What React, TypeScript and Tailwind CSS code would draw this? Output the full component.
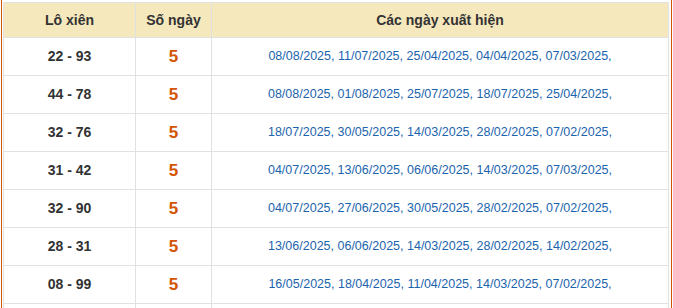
const rows: [string, string][] = [
  ['22 - 93', '08/08/2025, 11/07/2025, 25/04/2025, 04/04/2025, 07/03/2025,'],
  ['44 - 78', '08/08/2025, 01/08/2025, 25/07/2025, 18/07/2025, 25/04/2025,'],
  ['32 - 76', '18/07/2025, 30/05/2025, 14/03/2025, 28/02/2025, 07/02/2025,'],
  ['31 - 42', '04/07/2025, 13/06/2025, 06/06/2025, 14/03/2025, 07/03/2025,'],
  ['32 - 90', '04/07/2025, 27/06/2025, 30/05/2025, 28/02/2025, 07/02/2025,'],
  ['28 - 31', '13/06/2025, 06/06/2025, 14/03/2025, 28/02/2025, 14/02/2025,'],
  ['08 - 99', '16/05/2025, 18/04/2025, 11/04/2025, 14/03/2025, 07/02/2025,'],
]

export default function App() {
  return (
    <div className="w-[673px] h-[308px] overflow-hidden bg-white pl-[1px] font-['Liberation_Sans',Arial,sans-serif]">
      <div className="w-[671px] h-[320px] border-x-[1.5px] border-[#d35400] pl-[1px] pr-[0.5px] pt-[2px]">
        <table className="w-[666px] border-collapse table-fixed">
          <colgroup>
            <col className="w-[132px]" />
            <col className="w-[76px]" />
            <col />
          </colgroup>
          <thead>
            <tr className="h-[35px] bg-[#f6e8bd] text-[14px] font-bold text-[#333]">
              <th className="border border-[#e1e1e1]">Lô xiên</th>
              <th className="border border-[#e1e1e1]">Số ngày</th>
              <th className="border border-[#e1e1e1]">Các ngày xuất hiện</th>
            </tr>
          </thead>
          <tbody>
            {rows.map(([pair, dates]) => (
              <tr key={pair} className="h-[38px]">
                <td className="border border-[#e1e1e1] text-center text-[14px] font-bold text-[#333]">{pair}</td>
                <td className="border border-[#e1e1e1] text-center text-[17px] font-bold text-[#d35400]">5</td>
                <td className="border border-[#e1e1e1] text-center text-[12.5px] text-[#1b64ad]">{dates}</td>
              </tr>
            ))}
            <tr className="h-[38px]">
              <td className="border border-[#e1e1e1]"></td>
              <td className="border border-[#e1e1e1]"></td>
              <td className="border border-[#e1e1e1]"></td>
            </tr>
          </tbody>
        </table>
      </div>
    </div>
  )
}
